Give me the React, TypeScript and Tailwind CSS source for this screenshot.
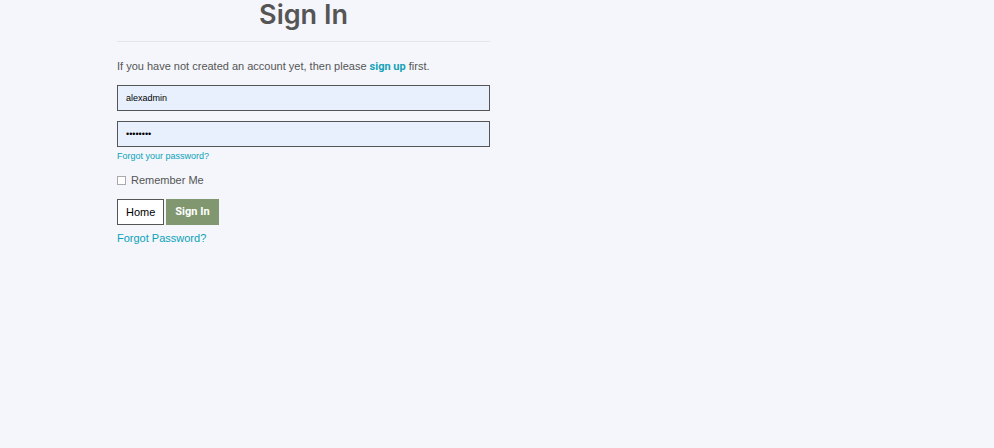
export default function App() {
  return (
    <main className="min-h-screen bg-[#f4f6fb] font-['Liberation_Sans',Arial,sans-serif] text-[11px] leading-4 text-[#555]">
      <div className="mx-auto w-full max-w-[760px]">
        <form className="w-full max-w-[373px]" onSubmit={(e) => e.preventDefault()}>
          <h1 className="text-center font-['Inter',sans-serif] text-[27px] leading-[30px] font-semibold">Sign In</h1>
          <hr className="mt-[11px] border-[#e4e5ea]" />
          <p className="mt-4">
            If you have not created an account yet, then please{' '}
            <a href="#signup" className="font-['Roboto',sans-serif] font-bold text-[#17a2b8]">sign up</a> first.
          </p>
          <input
            type="text"
            aria-label="Username"
            defaultValue="alexadmin"
            className="mt-[10px] block h-[26px] w-full border border-[#555] bg-[#e8f0fe] px-2 text-[9px] text-black outline-none"
          />
          <input
            type="password"
            aria-label="Password"
            defaultValue="password"
            className="mt-[10px] block h-[26px] w-full border border-[#555] bg-[#e8f0fe] px-2 text-[9px] text-black outline-none"
          />
          <a href="#reset" className="mt-px block w-fit text-[9px] leading-4 text-[#0aa2b8]">Forgot your password?</a>
          <label className="mt-2 flex w-fit items-center gap-[5px]">
            <input type="checkbox" className="size-[9px] appearance-none border border-[#aaa] bg-white checked:bg-[#80976f]" />
            Remember Me
          </label>
          <div className="mt-[11px] flex gap-[2px]">
            <button type="button" className="h-[26px] border border-[#555] bg-white px-2 text-black">Home</button>
            <button type="submit" className="h-[26px] border border-[#80976f] bg-[#80976f] px-2 font-['Roboto',sans-serif] font-bold text-white">Sign In</button>
          </div>
          <a href="#forgot" className="mt-[5px] block w-fit text-[#0aa2b8]">Forgot Password?</a>
        </form>
      </div>
    </main>
  );
}
